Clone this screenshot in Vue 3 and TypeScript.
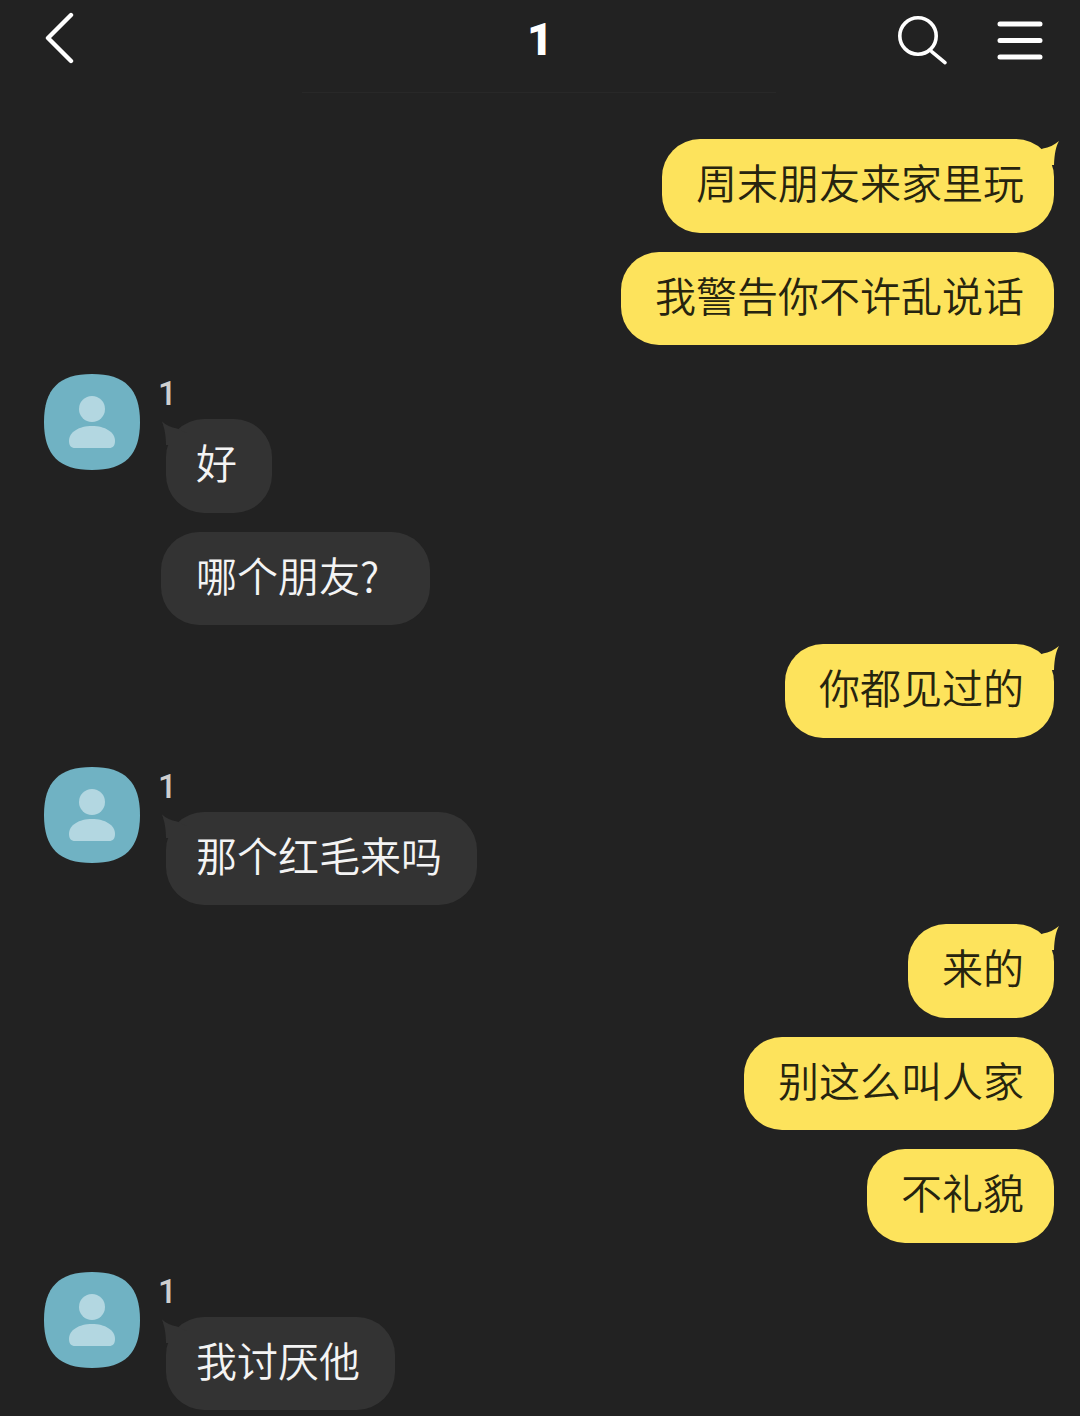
<script setup lang="ts">
interface Sent { kind: 'sent'; lines: string[] }
interface Received { kind: 'received'; name: string; lines: string[] }
type Group = Sent | Received

const groups: Group[] = [
  { kind: 'sent', lines: ['周末朋友来家里玩', '我警告你不许乱说话'] },
  { kind: 'received', name: '1', lines: ['好', '哪个朋友?'] },
  { kind: 'sent', lines: ['你都见过的'] },
  { kind: 'received', name: '1', lines: ['那个红毛来吗'] },
  { kind: 'sent', lines: ['来的', '别这么叫人家', '不礼貌'] },
  { kind: 'received', name: '1', lines: ['我讨厌他'] },
]
</script>

<template>
  <div class="chat">
    <header class="top-bar">
      <svg class="back" width="32" height="52" viewBox="0 0 32 52">
        <path d="M27 3 L4 26 L27 49" fill="none" stroke="#fff" stroke-width="4.4" stroke-linecap="round" stroke-linejoin="round" />
      </svg>
      <div class="title">1</div>
      <div class="actions">
        <svg class="search" width="52" height="52" viewBox="0 0 52 52">
          <circle cx="22" cy="22" r="18.2" fill="none" stroke="#fff" stroke-width="3.6" />
          <path d="M35.700 37.700 L49 48.700" fill="none" stroke="#fff" stroke-width="3.6" stroke-linecap="round" />
        </svg>
        <svg class="menu" width="46" height="41" viewBox="0 0 46 41">
          <path d="M3 4 H43 M3 20.500 H43 M3 37 H43" fill="none" stroke="#fff" stroke-width="5" stroke-linecap="round" />
        </svg>
      </div>
    </header>

    <main class="messages">
      <template v-for="(group, g) in groups" :key="g">
        <section v-if="group.kind === 'sent'" class="sent-group">
          <div v-for="(line, i) in group.lines" :key="line" class="bubble sent" :class="{ first: i === 0 }">
            <svg v-if="i === 0" class="tail tail-right" width="26" height="26" viewBox="0 0 26 26">
              <path d="M10 9.500 C16 8.500 21 6 26 2 C23 7 21.500 14 21 26 L0 26 L0 14 Z" fill="#fde35c" />
            </svg>
            {{ line }}
          </div>
        </section>
        <section v-else class="received-group">
          <svg class="avatar" width="96" height="96" viewBox="0 0 96 96">
            <path d="M48 0 C81 0 96 15 96 48 C96 81 81 96 48 96 C15 96 0 81 0 48 C0 15 15 0 48 0 Z" fill="#70b2c3" />
            <circle cx="48" cy="35" r="13" fill="#b3d7e1" />
            <path d="M25 67 C25 58 35 52 48 52 C61 52 71 58 71 67 C71 71.500 69 74 65 74 H31 C27 74 25 71.500 25 67 Z" fill="#b3d7e1" />
          </svg>
          <div class="received-col">
            <div class="name">{{ group.name }}</div>
            <div
              v-for="(line, i) in group.lines"
              :key="line"
              class="bubble received"
              :class="{ first: i === 0, question: line.endsWith('?') }"
            >
              <svg v-if="i === 0" class="tail tail-left" width="26" height="26" viewBox="0 0 26 26">
                <path d="M16 9.500 C10 8.500 5 6 1 2.500 C3 8 5 15 5 26 L26 26 L26 14 Z" fill="#333333" />
              </svg>
              {{ line }}
            </div>
          </div>
        </section>
      </template>
    </main>
  </div>
</template>

<style>
html, body {
  margin: 0;
  background: #222222;
}
</style>

<style scoped>
.chat {
  width: 1080px;
  height: 1416px;
  overflow: hidden;
  background: #222222;
  font-family: "Noto Sans CJK SC", "Noto Sans", sans-serif;
}

.top-bar {
  position: relative;
  display: grid;
  grid-template-columns: 1fr auto 1fr;
  align-items: start;
  height: 93px;
  padding: 0 37.500px;
  box-sizing: border-box;
}

.top-bar::after {
  content: "";
  position: absolute;
  left: 302px;
  right: 304px;
  bottom: 0;
  height: 1px;
  background: #282828;
}

.back {
  margin: 12px 0 0 6.500px;
}

.title {
  margin-top: 14px;
  color: #fff;
  font-family: "Roboto", sans-serif;
  font-size: 45px;
  font-weight: 900;
  line-height: 52px;
}

.actions {
  display: flex;
  justify-content: flex-end;
  gap: 48.500px;
}

.search {
  margin-top: 14px;
}

.menu {
  margin-top: 20px;
}

.messages {
  padding-top: 27px;
}

.sent-group {
  display: flex;
  flex-direction: column;
  align-items: flex-end;
  padding-right: 26px;
}

.received-group {
  display: flex;
  align-items: flex-start;
  margin-top: 29px;
  padding-left: 44px;
}

.received-col {
  display: flex;
  flex-direction: column;
  align-items: flex-start;
  margin-left: 21px;
}

.avatar {
  flex: none;
}

.name {
  height: 45px;
  margin-left: -3px;
  color: #cfcfcf;
  font-family: "Roboto", sans-serif;
  font-size: 33px;
  font-weight: 500;
  line-height: 40px;
}

.bubble {
  position: relative;
  box-sizing: border-box;
  height: 93.500px;
  margin-top: 19px;
  font-size: 41px;
  font-weight: 350;
  line-height: 84px;
  white-space: nowrap;
  border-radius: 38px;
}

.sent {
  padding: 0 30px 0 34.500px;
  color: #26240f;
  background: #fde35c;
}

.received {
  padding: 0 35px;
  color: #f4f4f4;
  background: #333333;
}

.received.first {
  margin-top: 0;
  margin-left: 5px;
  padding: 0 34.500px 0 30px;
}

.received.question {
  padding-right: 51px;
}

.tail {
  position: absolute;
  top: 0;
}

.tail-right {
  right: -5px;
}

.tail-left {
  left: -5px;
}
</style>
